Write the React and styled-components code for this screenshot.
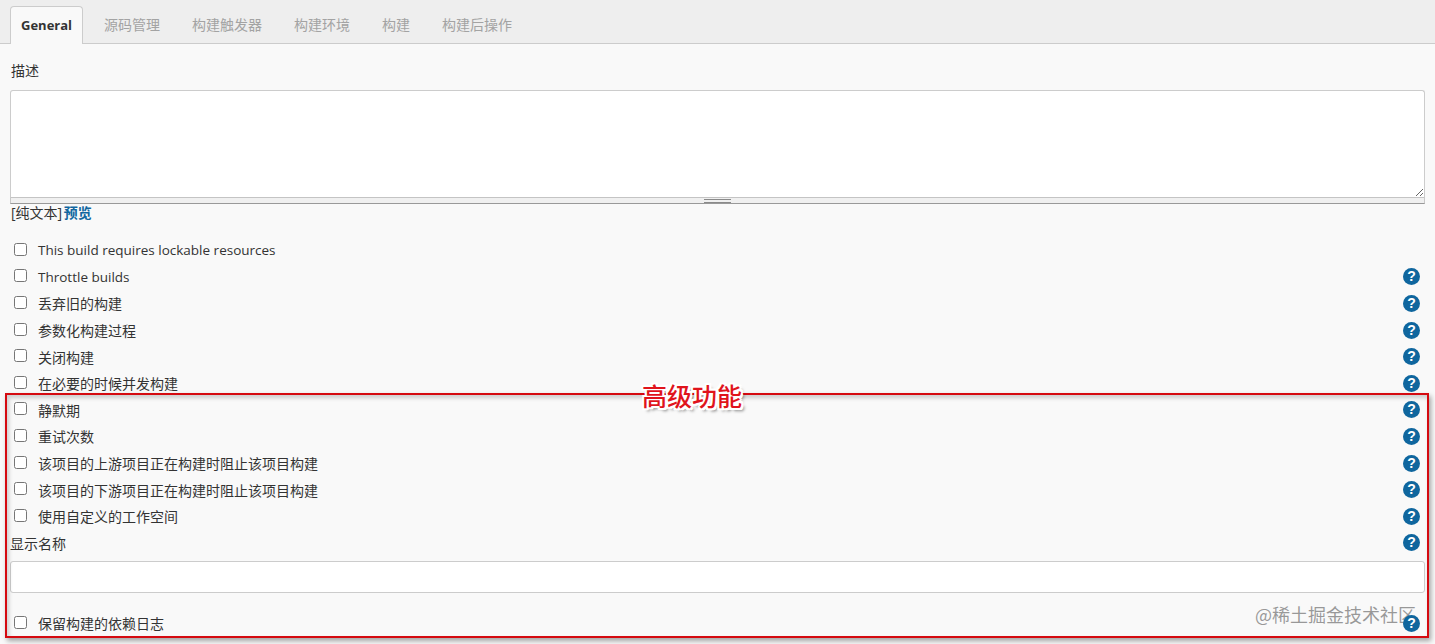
import React from "react";
import styled, { createGlobalStyle } from "styled-components";

const GlobalStyle = createGlobalStyle`
  html, body {
    margin: 0;
    padding: 0;
    height: 644px;
    overflow: hidden;
    background: #f9f9f9;
  }
  * {
    box-sizing: border-box;
  }
`;

const fontStack = `"Open Sans", "Noto Sans CJK SC", sans-serif`;

const Page = styled.div`
  position: relative;
  width: 1435px;
  height: 644px;
  overflow: hidden;
  background: #f9f9f9;
  color: #333;
  font-family: ${fontStack};
  font-size: 14px;
`;

// 탭
const TabBar = styled.div`
  display: flex;
  align-items: flex-end;
  height: 44px;
  padding-left: 10px;
  background: #eee;
  border-bottom: 1px solid #ccc;
`;

const Tab = styled.div`
  height: ${(p) => (p.$active ? "38px" : "37px")};
  margin-bottom: -1px;
  margin-right: 10px;
  padding: 0 10px;
  line-height: ${(p) => (p.$active ? "36px" : "33px")};
  font-size: ${(p) => (p.$active ? "13px" : "14px")};
  font-weight: ${(p) => (p.$active ? 700 : 400)};
  color: ${(p) => (p.$active ? "#333" : "#a3a3a3")};
  background: ${(p) => (p.$active ? "#f9f9f9" : "transparent")};
  border: 1px solid ${(p) => (p.$active ? "#ccc" : "transparent")};
  border-bottom: 0;
  border-radius: 4px 4px 0 0;
`;

const Body = styled.div`
  position: relative;
  z-index: 1;
  padding: 0 10px;
`;

const FieldLabel = styled.div`
  display: flex;
  align-items: center;
  justify-content: space-between;
  height: 26px;
  padding-left: 1px;
`;

const DescLabel = styled(FieldLabel)`
  margin-top: 13px;
  margin-bottom: 7px;
`;

const NameLabel = styled(FieldLabel)`
  height: 26.6px;
  padding-left: 0;
`;

const TextArea = styled.textarea`
  display: block;
  width: 1415px;
  height: 108px;
  padding: 6px;
  border: 1px solid #ccc;
  border-bottom-color: #c4c4c4;
  border-radius: 3px 3px 0 0;
  background: #fff;
  resize: vertical;
  outline: none;
`;

const Grip = styled.div`
  width: 1415px;
  height: 6px;
  background: #f0f0f0;
  border: 1px solid #c8c8c8;
  border-top: 0;
  border-bottom-color: #999;
  display: flex;
  justify-content: center;
  align-items: center;
`;

const GripLines = styled.span`
  display: block;
  width: 27px;
  height: 4px;
  border-top: 1px solid #8a8a8a;
  border-bottom: 1px solid #8a8a8a;
`;

const FormatLine = styled.div`
  height: 18px;
  margin-bottom: 15px;
  padding-left: 1px;
  line-height: 18px;
  word-spacing: -2px;
`;

const Link = styled.a`
  color: #11669f;
  font-weight: 700;
`;

const Row = styled.div`
  display: flex;
  align-items: center;
  height: 26.6px;
`;

const Check = styled.input.attrs({ type: "checkbox" })`
  width: 13px;
  height: 13px;
  margin: 0 11px 0 4px;
  flex: none;
  position: relative;
  top: -1px;
`;

const RowText = styled.span`
  flex: 1;
  font-size: ${(p) => (p.$latin ? "13.5px" : "14px")};
`;

const HelpIcon = styled.span`
  flex: none;
  display: flex;
  align-items: center;
  justify-content: center;
  width: 17px;
  height: 17px;
  margin-right: 5px;
  border-radius: 50%;
  background: #0f669e;
  color: #fff;
  font-family: "Liberation Sans", sans-serif;
  font-size: 14px;
  font-weight: 700;
  line-height: 17px;
`;

const NameInput = styled.input`
  display: block;
  width: 1415px;
  height: 32px;
  margin: 5px 0 17px;
  border: 1px solid #ccc;
  border-radius: 3px;
  background: #fff;
  outline: none;
`;

// 빨간 표시 영역
const Highlight = styled.div`
  position: absolute;
  z-index: 2;
  left: 5px;
  top: 393px;
  width: 1424px;
  height: 245px;
  border: 2.5px solid #d50a10;
  box-shadow: 2px 3px 5px rgba(0, 0, 0, 0.35), inset 2px 3px 4px rgba(0, 0, 0, 0.18);
  pointer-events: none;
`;

const Callout = styled.div`
  position: absolute;
  z-index: 3;
  left: 642px;
  top: 379px;
  font-family: "Noto Sans CJK SC", sans-serif;
  font-size: 25px;
  font-weight: 500;
  line-height: 32px;
  color: #e0141c;
  text-shadow: -1px -1px 0 #fff, 1px -1px 0 #fff, -1px 1px 0 #fff, 1px 1px 0 #fff,
    0 2px 0 #fff, 2px 0 0 #fff, -2px 0 0 #fff, 0 -2px 0 #fff, 2px 2px 0 #fff,
    -2px -2px 0 #fff, 2px -2px 0 #fff, -2px 2px 0 #fff, 3px 3px 3px rgba(0, 0, 0, 0.5);
`;

const Watermark = styled.div`
  position: absolute;
  left: 1255px;
  top: 602px;
  font-family: "Noto Sans CJK SC", sans-serif;
  font-size: 18px;
  line-height: 24px;
  color: rgba(120, 120, 120, 0.75);
  white-space: nowrap;
  pointer-events: none;
`;

const tabs = ["General", "源码管理", "构建触发器", "构建环境", "构建", "构建后操作"];

const options = [
  { label: "This build requires lockable resources", help: false, latin: true },
  { label: "Throttle builds", help: true, latin: true },
  { label: "丢弃旧的构建", help: true },
  { label: "参数化构建过程", help: true },
  { label: "关闭构建", help: true },
  { label: "在必要的时候并发构建", help: true },
  { label: "静默期", help: true },
  { label: "重试次数", help: true },
  { label: "该项目的上游项目正在构建时阻止该项目构建", help: true },
  { label: "该项目的下游项目正在构建时阻止该项目构建", help: true },
  { label: "使用自定义的工作空间", help: true },
];

const App = () => {
  return (
    <Page>
      <GlobalStyle />
      <TabBar>
        {tabs.map((t, i) => (
          <Tab key={t} $active={i === 0}>
            {t}
          </Tab>
        ))}
      </TabBar>
      <Body>
        <DescLabel>描述</DescLabel>
        <TextArea />
        <Grip>
          <GripLines />
        </Grip>
        <FormatLine>
          [纯文本] <Link>预览</Link>
        </FormatLine>
        {options.map((o) => (
          <Row key={o.label}>
            <Check />
            <RowText $latin={o.latin}>{o.label}</RowText>
            {o.help && <HelpIcon>?</HelpIcon>}
          </Row>
        ))}
        <NameLabel>
          显示名称
          <HelpIcon>?</HelpIcon>
        </NameLabel>
        <NameInput />
        <Row>
          <Check />
          <RowText>保留构建的依赖日志</RowText>
          <HelpIcon>?</HelpIcon>
        </Row>
      </Body>
      <Highlight />
      <Callout>高级功能</Callout>
      <Watermark>@稀土掘金技术社区</Watermark>
    </Page>
  );
};

export default App;
